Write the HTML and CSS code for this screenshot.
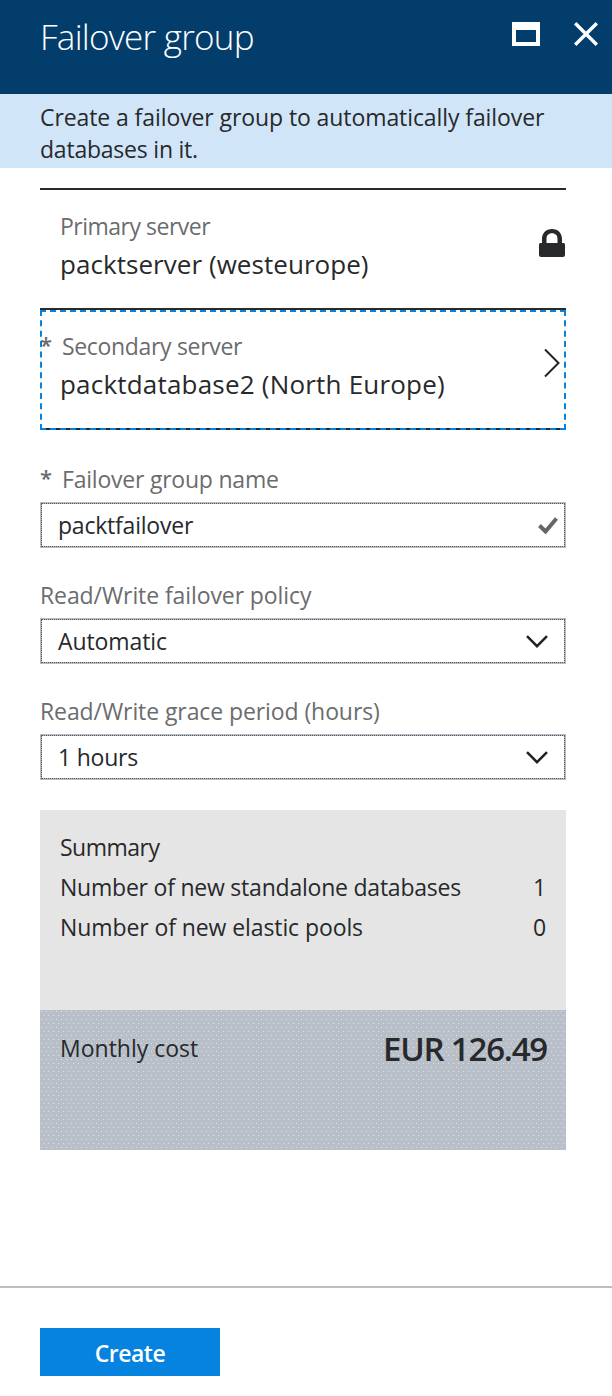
FILE: index.html
```html
<!DOCTYPE html>
<html lang="en">
<head>
<meta charset="utf-8">
<title>Failover group</title>
<link rel="stylesheet" href="styles.css">
</head>
<body>
<main class="blade">
  <header class="header">
    <h1 class="title">Failover group</h1>
    <div class="actions">
      <svg width="28" height="24" viewBox="0 0 28 24"><path d="M0 0H28V24H0ZM4 8V20H24V8Z" fill="#fff" fill-rule="evenodd"/></svg>
      <svg width="24" height="24" viewBox="0 0 24 24"><path d="M1.200 1.200L22.800 22.800M22.800 1.200L1.200 22.800" stroke="#fff" stroke-width="3.400"/></svg>
    </div>
  </header>
  <p class="banner">Create a failover group to automatically failover<br><span class="snug">databases in it.</span></p>
  <section class="content">
    <div class="row">
      <div class="label tight">Primary server</div>
      <div class="value">packtserver (westeurope)</div>
      <svg class="lock" width="26" height="28" viewBox="0 0 26 28"><path d="M3 14V10C3 4 7 0 13 0S23 4 23 10V14H24.500Q26 14 26 15.500V26Q26 28 24 28H2Q0 28 0 26V15.500Q0 14 1.500 14ZM7.500 14H18.500V10C18.500 6.500 16.500 4.300 13 4.300S7.500 6.500 7.500 10Z" fill="#27292b" fill-rule="evenodd"/></svg>
    </div>
    <div class="row selected">
      <span class="star">*</span>
      <div class="label indent">Secondary server</div>
      <div class="value loose">packtdatabase2 (North Europe)</div>
      <svg class="arrow" width="16" height="30" viewBox="0 0 16 30"><path d="M1 1.500L14.500 15L1 28.500" fill="none" stroke="#222" stroke-width="2"/></svg>
    </div>
    <div class="field">
      <div class="label named"><span class="req">*</span><span class="snug">Failover group name</span></div>
      <div class="input"><span class="snug">packtfailover</span><svg class="check" width="20" height="17" viewBox="0 0 20 17"><path d="M1.500 8.500L7.500 14.500L18.500 1.500" fill="none" stroke="#666" stroke-width="4"/></svg></div>
    </div>
    <div class="field">
      <div class="label">Read/Write failover policy</div>
      <div class="input"><span>Automatic</span><svg class="down" width="22" height="13" viewBox="0 0 22 13"><path d="M1 1.200L11 11.200L21 1.200" fill="none" stroke="#222" stroke-width="2.500"/></svg></div>
    </div>
    <div class="field">
      <div class="label">Read/Write grace period (hours)</div>
      <div class="input"><span class="snug">1 hours</span><svg class="down" width="22" height="13" viewBox="0 0 22 13"><path d="M1 1.200L11 11.200L21 1.200" fill="none" stroke="#222" stroke-width="2.500"/></svg></div>
    </div>
    <div class="summary">
      <div class="line"><span class="tight">Summary</span></div>
      <div class="line"><span class="snug">Number of new standalone databases</span><span>1</span></div>
      <div class="line"><span>Number of new elastic pools</span><span>0</span></div>
    </div>
    <div class="cost"><span class="cost-label">Monthly cost</span><strong class="price">EUR 126.49</strong></div>
  </section>
  <footer class="footer"><button class="create">Create</button></footer>
</main>
</body>
</html>
```
FILE: styles.css
```css
* { box-sizing: border-box; }
body { margin: 0; background: #fff; color: #27292b; font: 23px/32px "Open Sans", "Noto Sans", sans-serif; letter-spacing: -.09px; white-space: nowrap; }
svg { display: block; flex: none; }
.blade { height: 1396px; display: flex; flex-direction: column; }
.snug { letter-spacing: -.22px; }
.tight { letter-spacing: -.5px; }
.header { height: 94px; background: #033d6b; color: #fff; display: flex; justify-content: space-between; padding: 0 14px 0 40px; }
.title { margin: 0; font-size: 35px; font-weight: 300; line-height: 74px; letter-spacing: -.75px; }
.actions { display: flex; gap: 34px; padding-top: 22px; }
.banner { margin: 0; height: 74px; padding: 7px 40px 0; background: #d1e5f9; }
.content { padding: 20px 46px 0 40px; }
.row { position: relative; height: 120px; border-top: 2px solid #27292b; padding: 20px 20px 0; }
.label { color: #6b6c6e; margin-bottom: 7px; }
.row .label { margin-bottom: 4px; }
.value { font-size: 26px; line-height: 36px; letter-spacing: .05px; }
.loose { letter-spacing: .2px; }
.lock { position: absolute; right: 1px; top: 39px; }
.selected { height: 122px; border-bottom: 2px solid #27292b; }
.selected::after { content: ""; position: absolute; inset: 0 0 -2px; border: 2px dashed #0583de; }
.star, .req { font-weight: 600; font-size: 22px; }
.star { position: absolute; left: 0; top: 18px; color: #6b6c6e; }
.indent { padding-left: 2px; letter-spacing: -.33px; }
.arrow { position: absolute; right: 6px; top: 38px; }
.field { margin-top: 31px; }
.selected + .field { margin-top: 33px; }
.named { display: flex; }
.req { width: 22px; margin-top: -2px; }
.input { height: 46px; border: 2px solid #b5bbc2; outline: 1px dotted #55585b; outline-offset: -2px; padding: 0 6px 0 16px; display: flex; align-items: center; justify-content: space-between; }
.down { margin-right: 10px; }
.summary { height: 200px; margin-top: 30px; padding: 17px 20px 0; background: #e5e5e5; }
.line { display: flex; justify-content: space-between; line-height: 40px; }
.cost { height: 140px; padding: 18px 20px 0; background: radial-gradient(circle at 1.5px 1.5px, #d7e4ee 0 .7px, transparent .8px) 0 0 / 5px 8px, radial-gradient(circle at 3.5px 5.5px, #d7e4ee 0 .7px, transparent .8px) 0 0 / 5px 8px, #b9bfc8; display: flex; justify-content: space-between; line-height: 40px; }
.cost-label { letter-spacing: 0; }
.price { padding-top: 1px; font-size: 33px; font-weight: 600; letter-spacing: -1.2px; margin-right: -1px; }
.footer { margin-top: auto; height: 110px; border-top: 2px solid #b9bfc4; padding: 40px 40px 0; }
.create { display: block; width: 180px; height: 48px; border: 0; padding: 3px 0 0; background: #0583de; color: #fff; font: 600 23px/45px "Open Sans", "Noto Sans", sans-serif; letter-spacing: -.5px; }
```
